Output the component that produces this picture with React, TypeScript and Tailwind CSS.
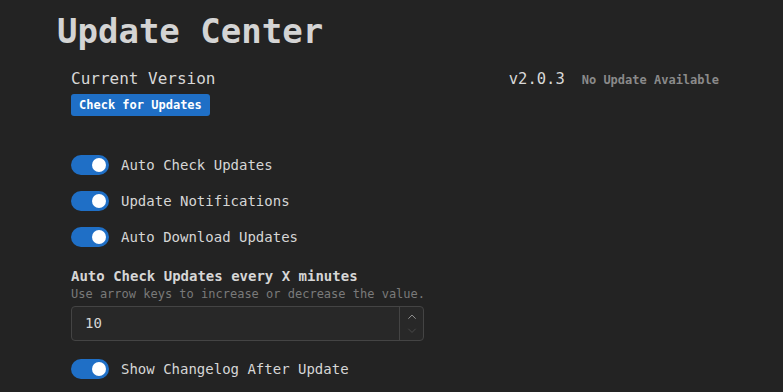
import { ChevronUp, ChevronDown } from "lucide-react";

const mono = { fontFamily: '"DejaVu Sans Mono", "Liberation Mono", monospace' };

function Toggle({ label }: { label: string }) {
  return (
    <div className="flex items-center h-[36px]">
      <div className="w-[38px] h-[20px] rounded-full bg-[#1f6fc6] flex items-center justify-end pr-[3px]">
        <div className="w-[14px] h-[14px] rounded-full bg-white" />
      </div>
      <span className="ml-[12px] text-[14px] text-[#d6d6d6]">{label}</span>
    </div>
  );
}

export default function App() {
  return (
    <div className="w-[783px] h-[392px] bg-[#232323] overflow-hidden" style={mono}>
      <div className="pl-[57px] pt-[10px]">
        <h1 className="text-[34px] leading-[42px] font-bold text-[#d4d4d4]">Update Center</h1>
      </div>

      <div className="pl-[71px] pr-[64px]">
        {/* Version */}
        <div className="flex items-start justify-between mt-[17px]">
          <div>
            <div className="text-[16px] leading-[20px] text-[#d8d8d8]">Current Version</div>
            <button className="mt-[5px] h-[22px] px-[8px] rounded-[3px] bg-[#1f6fc6] text-white text-[12px] font-bold leading-[22px]">
              Check for Updates
            </button>
          </div>
          <div className="flex items-baseline gap-[17px]">
            <span className="text-[15.5px] leading-[20px] text-[#d8d8d8]">v2.0.3</span>
            <span className="text-[12px] font-bold text-[#8a8a8a]">No Update Available</span>
          </div>
        </div>

        {/* Toggles */}
        <div className="mt-[31px] flex flex-col">
          <Toggle label="Auto Check Updates" />
          <Toggle label="Update Notifications" />
          <Toggle label="Auto Download Updates" />
        </div>

        {/* Interval */}
        <div className="mt-[12px]">
          <div className="text-[14px] leading-[18px] font-bold text-[#d6d6d6]">Auto Check Updates every X minutes</div>
          <div className="mt-[1px] text-[12px] leading-[16px] text-[#7a7a7a]">
            Use arrow keys to increase or decrease the value.
          </div>
          <div className="mt-[4px] w-[353px] h-[35px] rounded-[4px] border border-[#444] bg-[#282828] flex">
            <div className="flex-1 flex items-center pl-[13px] text-[14px] text-[#d6d6d6]">10</div>
            <div className="w-[24px] border-l border-[#444] flex flex-col items-center justify-between py-[3px]">
              <ChevronUp className="w-[14px] h-[14px] text-[#a8a8a8]" strokeWidth={1.5} />
              <ChevronDown className="w-[14px] h-[14px] text-[#505050]" strokeWidth={1.5} />
            </div>
          </div>
        </div>

        <div className="mt-[10px]">
          <Toggle label="Show Changelog After Update" />
        </div>
      </div>
    </div>
  );
}
